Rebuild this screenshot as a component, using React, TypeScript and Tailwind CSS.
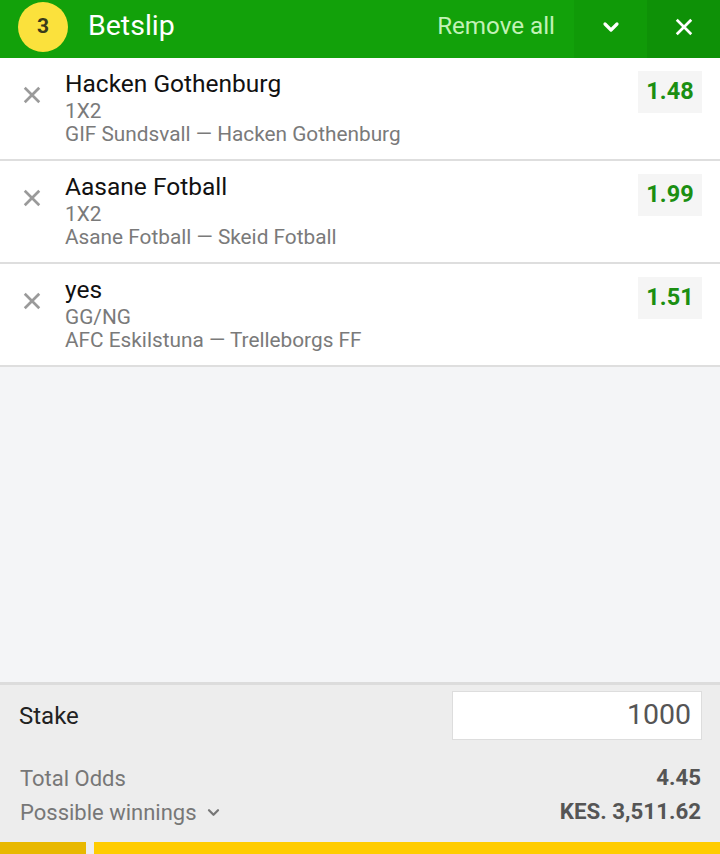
import React from "react";

const bets = [
  { title: "Hacken Gothenburg", market: "1X2", match: "GIF Sundsvall — Hacken Gothenburg", odds: "1.48" },
  { title: "Aasane Fotball", market: "1X2", match: "Asane Fotball — Skeid Fotball", odds: "1.99" },
  { title: "yes", market: "GG/NG", match: "AFC Eskilstuna — Trelleborgs FF", odds: "1.51" },
];

function XIcon({ className, stroke = 3 }: { className?: string; stroke?: number }) {
  return (
    <svg viewBox="0 0 20 20" className={className} fill="none" stroke="currentColor" strokeWidth={stroke} strokeLinecap="square">
      <path d="M3 3 L17 17 M17 3 L3 17" />
    </svg>
  );
}

function Chevron({ className, stroke = 3 }: { className?: string; stroke?: number }) {
  return (
    <svg viewBox="0 0 20 20" className={className} fill="none" stroke="currentColor" strokeWidth={stroke} strokeLinecap="round" strokeLinejoin="round">
      <path d="M4 7 L10 13 L16 7" />
    </svg>
  );
}

export default function App() {
  return (
    <div className="w-[720px] h-[854px] flex flex-col bg-[#f4f5f7] overflow-hidden" style={{ fontFamily: "Roboto, 'Noto Sans', sans-serif" }}>
      {/* Header */}
      <div className="h-[58px] flex items-stretch bg-[#12a10a]">
        <div className="flex items-center flex-1 pb-[5px]">
          <div className="ml-[18px] w-[50px] h-[50px] rounded-full bg-[#fbe13c] flex items-center justify-center text-[21px] font-bold text-[#3a3a1a]">3</div>
          <div className="ml-[20px] text-[28.5px] text-white">Betslip</div>
        </div>
        <div className="flex items-center pb-[5px] pr-[19px] text-[24.2px] text-[#c2f2b6]">Remove all</div>
        <div className="w-[73px] flex items-center justify-center pb-[4px] bg-[#109a08] text-white">
          <Chevron className="w-[20px] h-[20px]" stroke={3.2} />
        </div>
        <div className="w-[73px] flex items-center justify-center pb-[4px] bg-[#0e9107] text-white">
          <XIcon className="w-[18px] h-[18px]" stroke={3} />
        </div>
      </div>

      {/* Bets */}
      <div className="flex flex-col">
        {bets.map((b) => (
          <div key={b.title} className="h-[103px] bg-white border-b-2 border-[#dedede] flex">
            <div className="w-[65px] pt-[28px] flex justify-center pr-[2px] text-[#9a9a9a]">
              <XIcon className="w-[18px] h-[18px]" stroke={3} />
            </div>
            <div className="flex-1 pt-[11px] flex flex-col">
              <div className="text-[24.5px] leading-[30px] text-[#111]">{b.title}</div>
              <div className="text-[20.8px] leading-[24px] text-[#7a7a7a]">{b.market}</div>
              <div className="text-[20.8px] leading-[22px] text-[#7a7a7a]">{b.match}</div>
            </div>
            <div className="pt-[13px] pr-[18px]">
              <div className="w-[64px] h-[42px] bg-[#f5f5f5] flex items-center justify-center text-[23.5px] font-bold text-[#1b8f12]">{b.odds}</div>
            </div>
          </div>
        ))}
      </div>

      <div className="flex-1" />

      {/* Bottom panel */}
      <div className="border-t-[3px] border-[#dcdcdc] bg-[#ededed] h-[160px] flex flex-col">
        <div className="flex items-center justify-between pl-[19px] pr-[18px] pt-[6px]">
          <div className="text-[24px] text-[#222]">Stake</div>
          <div className="w-[250px] h-[49px] bg-white border border-[#dddddd] flex items-center justify-end pr-[10px] text-[28.5px] text-[#555]">1000</div>
        </div>
        <div className="flex items-center justify-between pl-[20px] pr-[19px] mt-[23px] h-[30px]">
          <div className="text-[22px] text-[#777]">Total Odds</div>
          <div className="text-[22.3px] font-bold text-[#555]">4.45</div>
        </div>
        <div className="flex items-center justify-between pl-[20px] pr-[19px] mt-[4px] h-[30px]">
          <div className="flex items-center text-[22px] text-[#777]">
            Possible winnings
            <Chevron className="ml-[9px] w-[15px] h-[15px]" stroke={3} />
          </div>
          <div className="text-[22.3px] font-bold text-[#555]">KES. 3,511.62</div>
        </div>
      </div>
      <div className="h-[12px] flex bg-[#ededed] gap-[8px]">
        <div className="w-[86px] bg-[#e8b800]" />
        <div className="flex-1 bg-[#ffcc00]" />
      </div>
    </div>
  );
}
